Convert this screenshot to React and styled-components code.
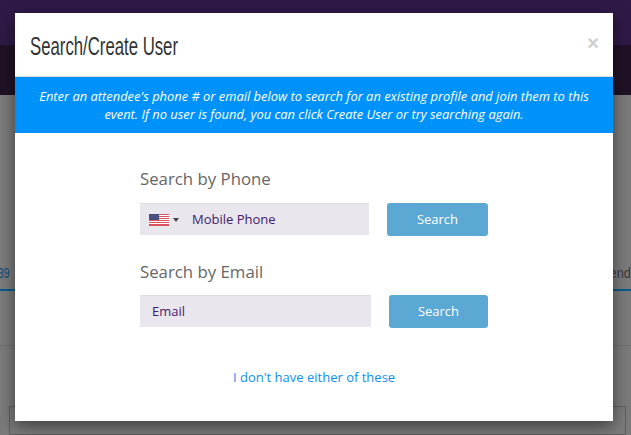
import React from 'react';
import styled, { createGlobalStyle } from 'styled-components';

const Global = createGlobalStyle`
    html, body { margin: 0; padding: 0; height: 100%; overflow: hidden; }
    body { font-family: "Open Sans", sans-serif; background: #7b7b7b; }
`

const Page = styled.div`
    position: relative;
    width: 631px;
    height: 435px;
    overflow: hidden;
    display: flex;
    flex-direction: column;
    background: #7b7b7b;
`
const TopBar = styled.div`
    height: 45px;
    background: #2f1a47;
`
const SubBar = styled.div`
    height: 50px;
    background: #1f1226;
`
const TabStrip = styled.div`
    height: 196px;
    box-sizing: border-box;
    display: flex;
    justify-content: space-between;
    align-items: flex-end;
    border-bottom: 2px solid #0b5a8e;
    padding-bottom: 6px;
    font-family: "Liberation Sans", sans-serif;
    font-size: 15px;
`
const TabCount = styled.span`
    margin-left: -2px;
    color: #0c4f7c;
    line-height: 20px;
    transform: scaleX(.7);
    transform-origin: left center;
`
const TabLabel = styled.span`
    margin-right: -31px;
    color: #3a3a3a;
    line-height: 20px;
    transform: scaleX(.85);
    transform-origin: left center;
`
const TabBody = styled.div`
    height: 54px;
    border-bottom: 1px solid #6f6f6f;
`
const LowerBox = styled.div`
    margin: 60px 5px 0 9px;
    flex: 1;
    border: 1px solid #5f5f5f;
`
const Modal = styled.div`
    position: absolute;
    left: 15px;
    top: 13px;
    width: 598px;
    height: 408px;
    background: #fff;
    box-shadow: 0 5px 15px rgba(0,0,0,.5);
    display: flex;
    flex-direction: column;
`
const Header = styled.div`
    height: 64px;
    box-sizing: border-box;
    border-bottom: 1px solid #d9d9d9;
    display: flex;
    align-items: center;
    justify-content: space-between;
    padding: 2px 14px 0 15px;
`
const Title = styled.h4`
    margin: 0;
    font-family: "Liberation Sans", sans-serif;
    font-weight: 400;
    font-size: 25px;
    line-height: 30px;
    color: #333;
    transform: scaleX(.67);
    transform-origin: left center;
`
const Close = styled.span`
    font-family: "Liberation Sans", sans-serif;
    font-weight: 700;
    font-size: 20px;
    line-height: 20px;
    margin-top: -5px;
    color: #cfcfcf;
`
const Notice = styled.div`
    height: 56px;
    box-sizing: border-box;
    background: #0092fb;
    color: #fff;
    font-size: 12.9px;
    font-style: italic;
    font-weight: 500;
    line-height: 18px;
    text-align: center;
    padding: 10px 20px 0;
`
const Body = styled.div`
    flex: 1;
    padding: 35px 0 0 125px;
    display: flex;
    flex-direction: column;
`
const Label = styled.div`
    font-size: 16.8px;
    line-height: 22px;
    color: #666;
    margin-bottom: ${p => p.$first ? '13px' : '12px'};
`
const Row = styled.div`
    display: flex;
    align-items: flex-start;
    margin-bottom: ${p => p.$last ? '0' : '25px'};
`
const Field = styled.div`
    width: ${p => p.$width}px;
    height: 32px;
    box-sizing: border-box;
    background: #e9e6ee;
    border-top: 1px solid #dedbe3;
    display: flex;
    align-items: center;
    padding-left: ${p => p.$flag ? '9px' : '12px'};
    padding-bottom: 2px;
    font-size: 13px;
    color: #43206b;
`
const Caret = styled.span`
    width: 0;
    height: 0;
    margin: 2px 13px 0 4px;
    border-left: 3px solid transparent;
    border-right: 3px solid transparent;
    border-top: 4px solid #444;
`
const SearchButton = styled.button`
    width: ${p => p.$width}px;
    height: 33px;
    margin-left: 18px;
    border: 0;
    border-radius: 3px;
    background: #5ba8d5;
    color: #fff;
    font-family: "Open Sans", sans-serif;
    font-size: 13px;
    font-weight: 500;
    padding: 0 0 2px;
`
const Forgot = styled.a`
    align-self: flex-start;
    margin: 40px 0 0 93px;
    font-size: 13px;
    line-height: 18px;
    color: #0e8ff0;
`
const FlagIcon = styled.svg`
    margin-top: 2px;
`

const Flag = () => (
    <FlagIcon width="20" height="12" viewBox="0 0 20 12">
        <rect width="20" height="12" fill="#fff" />
        {[0, 2, 4, 6, 8, 10].map(y => (
            <rect key={y} x="0" y={y} width="20" height="1" fill="#d9505f" />
        ))}
        <rect y="11" width="20" height="1" fill="#d9505f" />
        <rect width="10" height="6" fill="#474f83" />
    </FlagIcon>
)

export default function App() {
    return (
        <Page>
            <Global />
            <TopBar />
            <SubBar />
            <TabStrip>
                <TabCount>39</TabCount>
                <TabLabel>Attendees</TabLabel>
            </TabStrip>
            <TabBody />
            <LowerBox />
            <Modal>
                <Header>
                    <Title>Search/Create User</Title>
                    <Close>×</Close>
                </Header>
                <Notice>
                    Enter an attendee's phone # or email below to search for an existing profile and join them to this event. If no user is found, you can click Create User or try searching again.
                </Notice>
                <Body>
                    <Label $first>Search by Phone</Label>
                    <Row>
                        <Field $width={229} $flag>
                            <Flag />
                            <Caret />
                            Mobile Phone
                        </Field>
                        <SearchButton $width={101}>Search</SearchButton>
                    </Row>
                    <Label>Search by Email</Label>
                    <Row $last>
                        <Field $width={231}>Email</Field>
                        <SearchButton $width={99}>Search</SearchButton>
                    </Row>
                    <Forgot>I don't have either of these</Forgot>
                </Body>
            </Modal>
        </Page>
    );
}
